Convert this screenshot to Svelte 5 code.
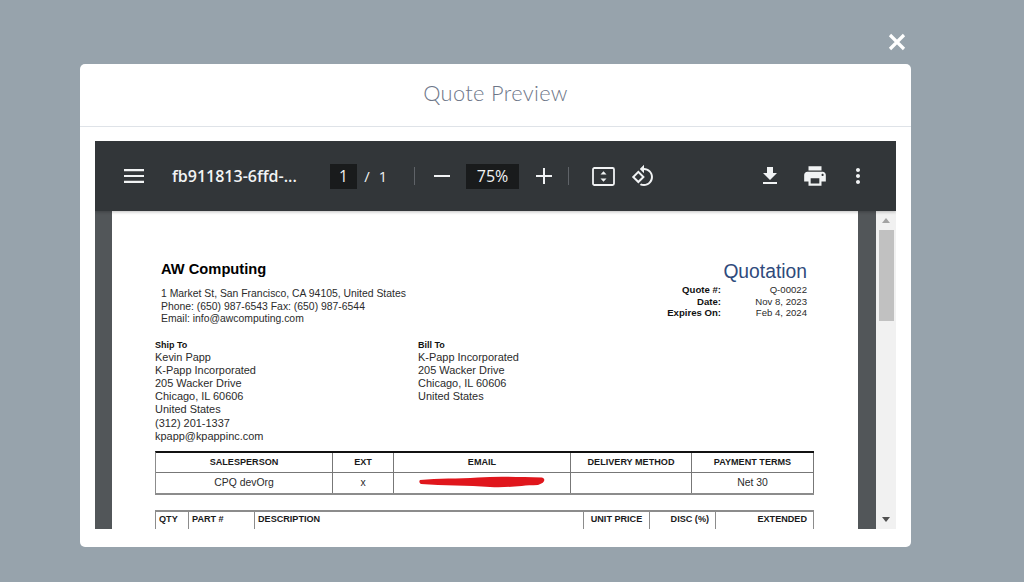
<script>
  let shipTo = [
    "Kevin Papp",
    "K-Papp Incorporated",
    "205 Wacker Drive",
    "Chicago, IL 60606",
    "United States",
    "(312) 201-1337",
    "kpapp@kpappinc.com"
  ];
  let billTo = ["K-Papp Incorporated", "205 Wacker Drive", "Chicago, IL 60606", "United States"];
  let quoteMeta = [
    ["Quote #:", "Q-00022"],
    ["Date:", "Nov 8, 2023"],
    ["Expires On:", "Feb 4, 2024"]
  ];
</script>

<div class="backdrop">
  <button class="close" type="button" aria-label="Close">
    <svg width="18" height="18" viewBox="0 0 18 18">
      <path d="M2 2l14 14M16 2L2 16" stroke="#fff" stroke-width="3.2" fill="none" />
    </svg>
  </button>

  <div class="modal">
    <header class="modal-head">Quote Preview</header>

    <div class="modal-body">
      <div class="viewer">
        <div class="toolbar">
          <svg class="menu" width="20" height="16" viewBox="0 0 20 16">
            <path d="M0 1h20v2.2H0zM0 6.9h20v2.2H0zM0 12.8h20V15H0z" fill="#f1f3f4" />
          </svg>
          <span class="file-name">fb911813-6ffd-...</span>
          <span class="num-box page-box">1</span>
          <span class="slash">/</span>
          <span class="page-total">1</span>
          <span class="sep sep-a"></span>
          <svg class="minus" width="16" height="16" viewBox="0 0 16 16">
            <path d="M0 7h16v2H0z" fill="#f1f3f4" />
          </svg>
          <span class="num-box zoom-box">75%</span>
          <svg class="plus" width="16" height="16" viewBox="0 0 16 16">
            <path d="M7 0h2v7h7v2H9v7H7V9H0V7h7z" fill="#f1f3f4" />
          </svg>
          <span class="sep sep-b"></span>
          <svg class="fit" width="23" height="19" viewBox="0 0 23 19">
            <rect x="1" y="1" width="21" height="17" rx="1.5" fill="none" stroke="#f1f3f4" stroke-width="1.8" />
            <path d="M11.5 4.2l3 3.3h-6zM11.5 14.8l3-3.3h-6z" fill="#f1f3f4" />
          </svg>
          <svg class="rotate" width="24" height="24" viewBox="0 0 24 24">
            <path
              d="M7.34 6.41L.86 12.9l6.49 6.48 6.49-6.48-6.5-6.49zM3.69 12.9l3.66-3.66L11 12.9l-3.66 3.66-3.65-3.66zm15.67-6.26C17.61 4.88 15.3 4 13 4V.76L8.76 5 13 9.24V6c1.79 0 3.58.68 4.95 2.05 2.73 2.73 2.73 7.17 0 9.9C16.58 19.32 14.79 20 13 20c-.97 0-1.94-.21-2.84-.61l-1.49 1.49C10.02 21.62 11.51 22 13 22c2.3 0 4.61-.88 6.36-2.64 3.52-3.51 3.52-9.21 0-12.72z"
              fill="#f1f3f4"
            />
          </svg>
          <svg class="download" width="24" height="24" viewBox="0 0 24 24">
            <path d="M19 9h-4V3H9v6H5l7 7 7-7zM5 18v2h14v-2H5z" fill="#f1f3f4" />
          </svg>
          <svg class="print" width="26" height="26" viewBox="0 0 24 24">
            <path
              d="M19 8H5c-1.66 0-3 1.34-3 3v6h4v4h12v-4h4v-6c0-1.66-1.34-3-3-3zm-3 11H8v-5h8v5zm3-7c-.55 0-1-.45-1-1s.45-1 1-1 1 .45 1 1-.45 1-1 1zm-1-9H6v4h12V3z"
              fill="#f1f3f4"
            />
          </svg>
          <svg class="more" width="24" height="24" viewBox="0 0 24 24">
            <path
              d="M12 8c1.1 0 2-.9 2-2s-.9-2-2-2-2 .9-2 2 .9 2 2 2zm0 2c-1.1 0-2 .9-2 2s.9 2 2 2 2-.9 2-2-.9-2-2-2zm0 6c-1.1 0-2 .9-2 2s.9 2 2 2 2-.9 2-2-.9-2-2-2z"
              fill="#f1f3f4"
            />
          </svg>
        </div>

        <div class="content">
          <div class="pages">
            <div class="page">
              <div class="top-row">
                <div class="company">
                  <div class="company-name">AW Computing</div>
                  <div class="company-info">
                    <div>1 Market St, San Francisco, CA 94105, United States</div>
                    <div>Phone: (650) 987-6543 Fax: (650) 987-6544</div>
                    <div>Email: info@awcomputing.com</div>
                  </div>
                </div>
                <div class="quote">
                  <div class="quote-title">Quotation</div>
                  {#each quoteMeta as row}
                    <div class="quote-row">
                      <b>{row[0]}</b>
                      <span>{row[1]}</span>
                    </div>
                  {/each}
                </div>
              </div>

              <div class="addresses">
                <div class="ship">
                  <div class="addr-label">Ship To</div>
                  {#each shipTo as line}
                    <div>{line}</div>
                  {/each}
                </div>
                <div class="bill">
                  <div class="addr-label">Bill To</div>
                  {#each billTo as line}
                    <div>{line}</div>
                  {/each}
                </div>
              </div>

              <div class="sales-table">
                <div class="th">SALESPERSON</div>
                <div class="th">EXT</div>
                <div class="th">EMAIL</div>
                <div class="th">DELIVERY METHOD</div>
                <div class="th">PAYMENT TERMS</div>
                <div class="td">CPQ devOrg</div>
                <div class="td">x</div>
                <div class="td email-cell">
                  <svg class="scribble" width="128" height="16" viewBox="0 0 128 16">
                    <path
                      d="M2 5C20 3 40 4 60 2.500S100 2 124 2.500C128 4 127 8 120 10C100 10.500 90 13 72 12C50 10 25 11 3 9C1 8 1 6 2 5Z"
                      fill="#e0161c"
                    />
                  </svg>
                </div>
                <div class="td"></div>
                <div class="td">Net 30</div>
              </div>

              <div class="items-table">
                <div class="th left">QTY</div>
                <div class="th left">PART #</div>
                <div class="th left">DESCRIPTION</div>
                <div class="th">UNIT PRICE</div>
                <div class="th right">DISC (%)</div>
                <div class="th right">EXTENDED</div>
              </div>
            </div>
          </div>

          <div class="scrollbar">
            <span class="arrow up"></span>
            <span class="thumb"></span>
            <span class="arrow down"></span>
          </div>
        </div>
      </div>
    </div>
  </div>
</div>

<style>
  :global(body) {
    margin: 0;
  }

  .backdrop {
    position: relative;
    width: 1024px;
    height: 582px;
    box-sizing: border-box;
    padding: 64px 113px 0 80px;
    overflow: hidden;
    background: #97a3ac;
    font-family: "Liberation Sans", Arial, sans-serif;
  }

  .close {
    position: absolute;
    top: 33px;
    left: 888px;
    width: 18px;
    height: 18px;
    padding: 0;
    border: 0;
    background: transparent;
    line-height: 0;
  }

  .modal {
    height: 483px;
    display: flex;
    flex-direction: column;
    overflow: hidden;
    background: #fff;
    border-radius: 5px;
  }

  .modal-head {
    height: 56px;
    flex-shrink: 0;
    display: flex;
    align-items: center;
    justify-content: center;
    padding-bottom: 6px;
    border-bottom: 1px solid #dfe3e8;
    color: #6d7688;
    font-family: Lato, sans-serif;
    font-size: 21.8px;
    font-weight: 300;
    letter-spacing: 0.35px;
  }

  .modal-body {
    padding: 14px 15px 0;
  }

  .viewer {
    height: 388px;
    display: flex;
    flex-direction: column;
    overflow: hidden;
    background: #525659;
  }

  .toolbar {
    height: 70px;
    flex-shrink: 0;
    display: flex;
    align-items: center;
    background: #323639;
    color: #f1f3f4;
    font-family: "Open Sans", sans-serif;
    position: relative;
    z-index: 1;
    box-shadow: 0 1px 3px rgba(0, 0, 0, 0.25);
  }

  .menu {
    margin-left: 29px;
  }

  .file-name {
    width: 158px;
    margin-left: 28px;
    flex-shrink: 0;
    font-size: 16px;
    font-weight: 600;
    white-space: nowrap;
  }

  .num-box {
    height: 25px;
    display: flex;
    align-items: center;
    justify-content: center;
    background: #191b1c;
    flex-shrink: 0;
  }

  .page-box {
    width: 27px;
    font-size: 15.5px;
  }

  .slash {
    width: 10px;
    margin-left: 5px;
    font-size: 15px;
    text-align: center;
  }

  .page-total {
    width: 10px;
    margin-left: 6px;
    font-size: 14.5px;
    text-align: center;
  }

  .sep {
    width: 1px;
    height: 18px;
    flex-shrink: 0;
    background: #5f6368;
  }

  .sep-a {
    margin-left: 26px;
  }

  .minus {
    margin-left: 19px;
  }

  .zoom-box {
    width: 53px;
    margin-left: 16px;
    font-size: 16px;
  }

  .plus {
    margin-left: 17px;
  }

  .sep-b {
    margin-left: 16px;
  }

  .fit {
    margin-left: 23px;
  }

  .rotate {
    margin-left: 16px;
    margin-top: -1px;
  }

  .download {
    margin-left: auto;
    margin-right: 1px;
  }

  .print {
    margin-left: 19px;
  }

  .more {
    margin-left: 18px;
    margin-right: 26px;
  }

  .content {
    flex: 1;
    min-height: 0;
    display: flex;
    justify-content: space-between;
  }

  .pages {
    padding-left: 17px;
    overflow: hidden;
  }

  .page {
    width: 746px;
    height: 318px;
    box-sizing: border-box;
    padding: 49px 44px 0 43px;
    background: #fff;
    color: #2b2b2b;
    font-size: 10.95px;
    overflow: hidden;
  }

  .top-row {
    display: flex;
    justify-content: space-between;
    height: 80px;
    padding-left: 6px;
    padding-right: 7px;
  }

  .company-name {
    color: #000;
    font-size: 14.7px;
    font-weight: 700;
    line-height: 18px;
    margin-bottom: 10px;
  }

  .company-info {
    font-size: 10.4px;
    line-height: 12.6px;
  }

  .quote {
    width: 150px;
    text-align: right;
  }

  .quote-title {
    color: #2f4a7c;
    font-size: 19.3px;
    line-height: 24px;
    margin-bottom: 0;
  }

  .quote-row {
    display: flex;
    justify-content: space-between;
    font-size: 9.6px;
    line-height: 11.5px;
  }

  .quote-row b {
    width: 64px;
    text-align: right;
    color: #111;
    white-space: nowrap;
  }

  .addresses {
    display: flex;
    line-height: 13.2px;
  }

  .ship {
    width: 263px;
    flex-shrink: 0;
  }

  .addr-label {
    font-size: 9px;
    font-weight: 700;
    line-height: 10.5px;
    color: #111;
  }

  .sales-table {
    display: grid;
    grid-template-columns: 177px 61px 177px 121px 1fr;
    grid-auto-rows: 20px;
    margin-top: 8px;
    border-top: 2px solid #111;
    border-bottom: 2px solid #8c8c8c;
    border-left: 1px solid #8c8c8c;
  }

  .sales-table .th,
  .sales-table .td {
    border-right: 1px solid #777;
  }

  .sales-table .th {
    border-bottom: 1px solid #777;
  }

  .th,
  .td {
    display: flex;
    align-items: center;
    justify-content: center;
    box-sizing: border-box;
    white-space: nowrap;
  }

  .th {
    font-size: 9.1px;
    font-weight: 700;
    color: #1a1a1a;
  }

  .td {
    font-size: 10.4px;
  }

  .email-cell {
    position: relative;
  }

  .scribble {
    position: absolute;
    left: 24px;
    top: 2px;
  }

  .items-table {
    display: grid;
    grid-template-columns: 33px 66px 329px 66px 66px 1fr;
    grid-auto-rows: 20px;
    margin-top: 15px;
    border-top: 2px solid #8c8c8c;
    border-left: 1px solid #8c8c8c;
  }

  .items-table .th {
    align-items: flex-start;
    padding-top: 2px;
    border-right: 1px solid #8c8c8c;
  }

  .items-table .left {
    justify-content: flex-start;
    padding-left: 3px;
  }

  .items-table .right {
    justify-content: flex-end;
    padding-right: 6px;
  }

  .scrollbar {
    width: 20px;
    flex-shrink: 0;
    display: flex;
    flex-direction: column;
    align-items: center;
    background: #f1f1f1;
  }

  .thumb {
    width: 15px;
    height: 91px;
    margin-top: 7px;
    background: #c1c1c1;
  }

  .arrow {
    width: 0;
    height: 0;
    border-left: 4px solid transparent;
    border-right: 4px solid transparent;
  }

  .arrow.up {
    margin-top: 7px;
    border-bottom: 5px solid #a3a3a3;
  }

  .arrow.down {
    margin-top: auto;
    margin-bottom: 7px;
    border-top: 5px solid #505050;
  }
</style>
